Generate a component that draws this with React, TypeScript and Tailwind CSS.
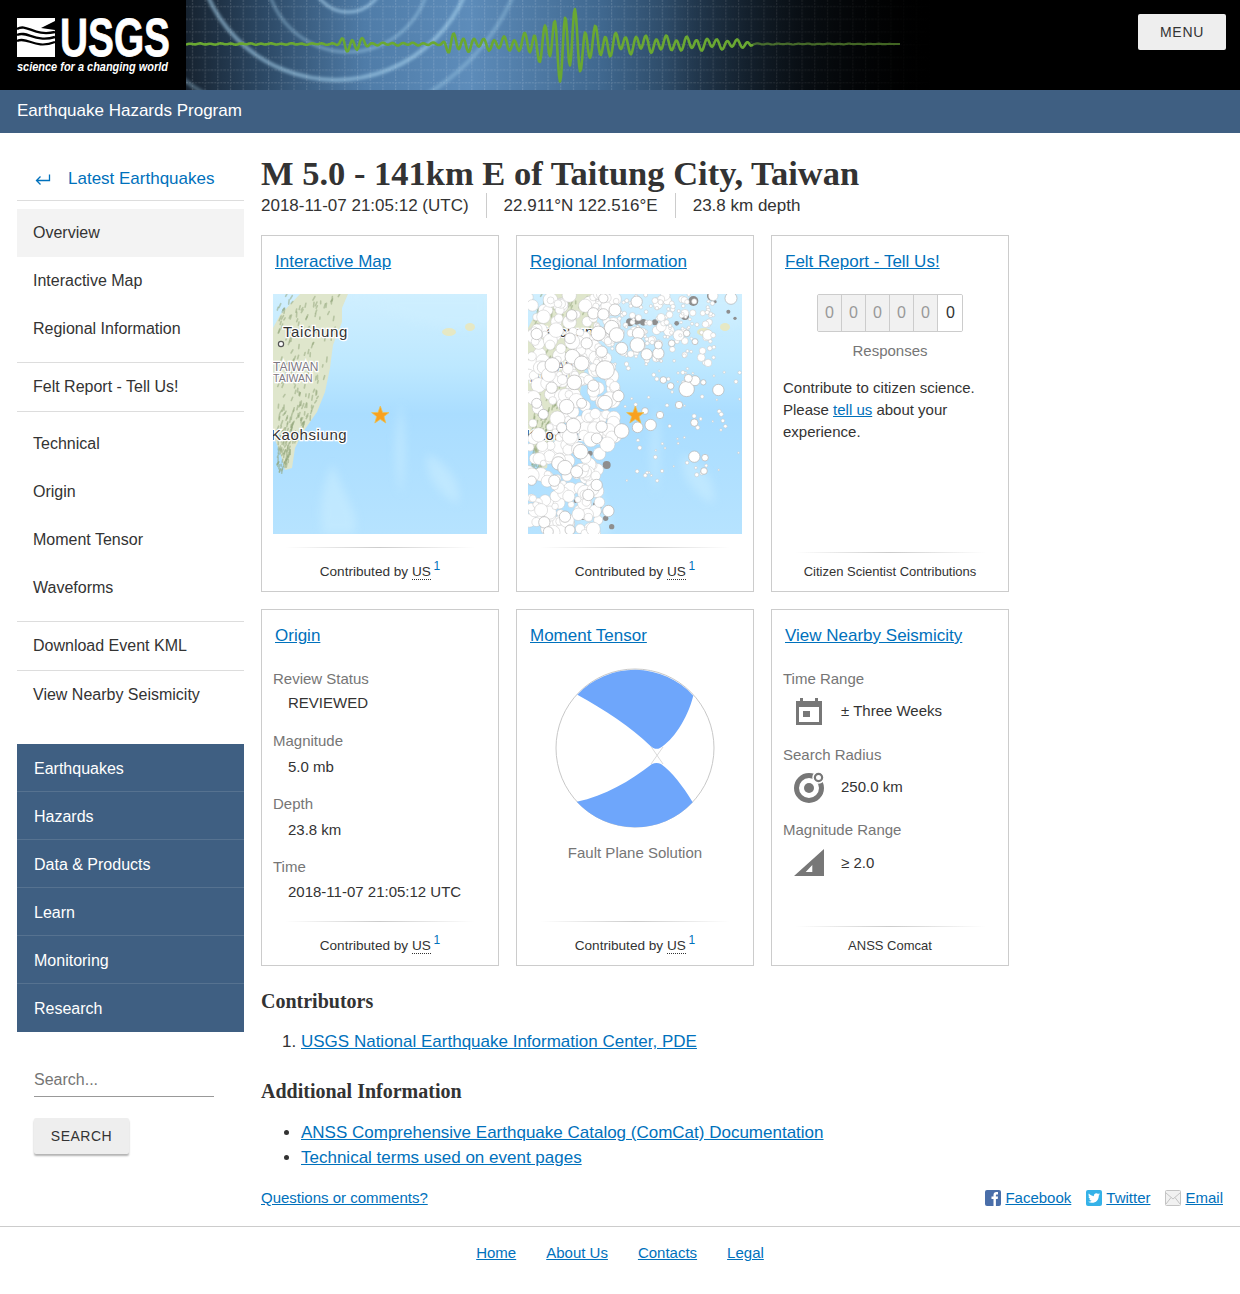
import type { ReactNode } from "react";
import { FaTwitter } from "react-icons/fa";

const sans = "font-['Liberation_Sans',Arial,sans-serif]";
const serif = "font-['Liberation_Serif','Times_New_Roman',serif]";

// small seeded generator so the drawn maps stay the same on every load
function seeded(seed: number) {
  let s = seed;
  return () => {
    s = (s * 16807) % 2147483647;
    return (s - 1) / 2147483646;
  };
}

function interpolate(points: number[][], x: number) {
  for (let i = 1; i < points.length; i++) {
    if (x <= points[i][0]) {
      const [x0, y0] = points[i - 1];
      const [x1, y1] = points[i];
      return y0 + ((y1 - y0) * (x - x0)) / (x1 - x0);
    }
  }
  return points[points.length - 1][1];
}

const ENVELOPE = [
  [186, 0.6], [330, 0.8], [338, 2], [345, 9], [358, 8], [372, 1.5], [440, 1.5], [450, 12], [478, 6], [520, 9],
  [545, 22], [568, 46], [590, 20], [620, 11], [700, 7], [750, 4], [753, 0.6], [880, 0.3], [900, 0],
];

function wavePath(from: number, to: number) {
  let d = "";
  for (let gx = from; gx <= to; gx += 1) {
    const shape = Math.sin(gx * 0.62) * 0.72 + Math.sin(gx * 0.27 + 1) * 0.28;
    const y = 44 + interpolate(ENVELOPE, gx) * shape;
    d += `${d ? "L" : "M"}${gx - 186} ${y.toFixed(1)}`;
  }
  return d;
}

function Banner() {
  return (
    <svg width="745" height="90" viewBox="0 0 745 90" className="block shrink-0">
      <defs>
        <linearGradient id="bannerBg" x1="0" x2="1" y1="0" y2="0">
          <stop offset="0" stopColor="#16222f" />
          <stop offset="0.1" stopColor="#2b4763" />
          <stop offset="0.24" stopColor="#4f7ca8" />
          <stop offset="0.38" stopColor="#5d8cba" />
          <stop offset="0.56" stopColor="#3f678e" />
          <stop offset="0.68" stopColor="#263f58" />
          <stop offset="0.82" stopColor="#111c27" />
          <stop offset="1" stopColor="#000000" />
        </linearGradient>
        <linearGradient id="bannerFade" x1="0" x2="1" y1="0" y2="0">
          <stop offset="0" stopColor="#000" stopOpacity="0" />
          <stop offset="0.8" stopColor="#000" stopOpacity="0.75" />
          <stop offset="1" stopColor="#000" stopOpacity="1" />
        </linearGradient>
        <pattern id="bannerGrid" width="12.7" height="12.7" patternUnits="userSpaceOnUse">
          <path d="M0 6.5H12.7M6.5 0V12.7" stroke="#ffffff" strokeOpacity="0.16" strokeWidth="1" strokeDasharray="2 1" />
        </pattern>
        <filter id="ringBlur">
          <feGaussianBlur stdDeviation="1.6" />
        </filter>
      </defs>
      <rect width="745" height="90" fill="url(#bannerBg)" />
      <g fill="none" stroke="#a9d3ee" filter="url(#ringBlur)">
        <circle cx="162" cy="-24" r="36" strokeWidth="3" strokeOpacity="0.7" />
        <circle cx="162" cy="-30" r="82" strokeWidth="3" strokeOpacity="0.45" />
        <circle cx="150" cy="-60" r="140" strokeWidth="4" strokeOpacity="0.6" />
        <circle cx="130" cy="-90" r="215" strokeWidth="4" strokeOpacity="0.35" />
      </g>
      <rect width="745" height="90" fill="url(#bannerGrid)" />
      <rect x="480" width="265" height="90" fill="url(#bannerFade)" />
      <path d={wavePath(186, 753)} fill="none" stroke="#6aa832" strokeWidth="2.6" strokeLinejoin="round" />
      <path d={wavePath(753, 900)} fill="none" stroke="#5c8f30" strokeWidth="2.2" strokeOpacity="0.7" />
    </svg>
  );
}

function Logo() {
  return (
    <svg width="186" height="90" viewBox="0 0 186 90" className="block shrink-0">
      <rect x="17" y="18" width="38" height="39" fill="#fff" />
      <path d="M55 21L41 28L55 30Z" fill="#000" />
      <g fill="none" stroke="#000">
        <path d="M17 29C27 23 34 37 55 32" strokeWidth="2.4" />
        <path d="M17 35C27 30 35 43 55 37" strokeWidth="2.4" />
        <path d="M17 41C27 36 35 50 55 42" strokeWidth="2.2" />
      </g>
      <text x="60" y="56" textLength="110" lengthAdjust="spacingAndGlyphs" fontFamily="Liberation Sans" fontWeight="700" fontSize="54" fill="#fff" stroke="#fff" strokeWidth="0.8">USGS</text>
      <text x="17" y="71" textLength="151" lengthAdjust="spacingAndGlyphs" fontFamily="Liberation Sans" fontWeight="700" fontStyle="italic" fontSize="12.5" fill="#fff">science for a changing world</text>
    </svg>
  );
}

const MAP_BUBBLES = [
  [265, 190, 14], [365, 200, 17], [300, 225, 18], [235, 235, 17], [265, 238, 17], [170, 240, 16], [648, 190, 18],
  [290, 278, 22], [305, 300, 22], [250, 295, 22], [370, 295, 18], [367, 330, 22], [320, 340, 18], [215, 325, 17],
  [165, 310, 16], [65, 297, 17], [395, 358, 17], [430, 355, 17], [260, 350, 17], [172, 365, 22], [112, 390, 22],
  [200, 385, 22], [270, 405, 28], [178, 442, 22], [235, 452, 17], [110, 458, 17], [155, 515, 22], [65, 505, 15],
  [85, 538, 15], [200, 505, 15], [270, 503, 22], [310, 483, 17], [260, 575, 17], [320, 588, 22], [368, 577, 16],
  [407, 570, 17], [245, 610, 16], [175, 572, 22], [140, 578, 15], [197, 650, 22], [130, 685, 20], [150, 698, 22],
  [185, 710, 18], [118, 737, 17], [50, 737, 14], [245, 750, 17], [220, 780, 17], [280, 828, 17], [150, 845, 17],
  [88, 862, 17], [100, 890, 15], [165, 885, 15], [515, 462, 23], [610, 465, 17], [540, 437, 15], [538, 665, 17],
  [570, 668, 10], [567, 708, 10], [538, 563, 11], [435, 540, 11], [492, 510, 11], [390, 528, 10], [445, 435, 10],
  [467, 453, 10], [520, 430, 12], [565, 442, 8], [430, 330, 12], [470, 325, 10], [515, 295, 10], [540, 320, 9],
];

const MAP_DARK = [
  [590, 183, 14], [535, 198, 15], [510, 243, 12], [345, 262, 12], [365, 255, 14], [385, 262, 10], [420, 262, 9],
  [275, 690, 12], [248, 810, 14], [205, 843, 12], [272, 850, 8], [225, 655, 8], [640, 230, 6], [240, 200, 7],
  [290, 875, 8], [182, 798, 6], [485, 265, 7], [600, 200, 5], [660, 250, 5], [250, 830, 9],
];

const RIGHT_COAST = [[0, 75], [14, 69], [28, 69], [51, 60], [74, 57], [98, 52], [118, 44], [138, 30], [154, 22], [176, 18]];

function smallBubbles() {
  const rnd = seeded(41);
  const out: number[][] = [];
  for (let i = 0; i < 620; i++) {
    const pick = rnd();
    if (pick < 0.5) {
      // the thick band along the island and down to the south
      const y = 178 + rnd() * 720;
      const x = 40 + rnd() * (y > 640 ? 220 : 260);
      out.push([x, y, 9 + rnd() * 14]);
    } else if (pick < 0.8) {
      // the arc running to the north-east
      out.push([240 + rnd() * 360, 178 + rnd() * 210, 4 + rnd() * rnd() * 13]);
    } else {
      const x = 300 + rnd() * 380;
      const y = 400 + rnd() * 340;
      if (rnd() < 0.5) out.push([x, y, 2.5 + rnd() * 4]);
    }
  }
  return out;
}

function landStreaks() {
  const rnd = seeded(7);
  const out: number[][] = [];
  for (let i = 0; i < 230; i++) {
    const y = rnd() * 176;
    const x = 5 + rnd() * (interpolate(RIGHT_COAST, y) - 8);
    out.push([x, y, x - 2 + rnd() * 2, y + 2 + rnd() * 3]);
  }
  return out;
}

const toX = (zoomX: number) => (zoomX - 39) / 3;
const toY = (zoomY: number) => (zoomY - 177) / 3;

function Star() {
  return (
    <polygon
      points="107.3,112 109.6,118.4 116,118.6 111,122.6 112.8,129 107.3,125.3 101.8,129 103.6,122.6 98.6,118.6 105,118.4"
      fill="#f9a11f"
      stroke="#e7c35a"
      strokeWidth="0.8"
    />
  );
}

function MapPicture({ regional = false }: { regional?: boolean }) {
  const id = regional ? "regional" : "interactive";
  const label = { fontFamily: "Liberation Sans", stroke: "#ffffff", strokeWidth: 2.5, paintOrder: "stroke" as const };
  return (
    <svg viewBox="0 0 214 240" width="214" height="240" className="block">
      <defs>
        <linearGradient id={`${id}-sea`} x1="0" x2="0" y1="0" y2="1">
          <stop offset="0" stopColor="#d0efff" />
          <stop offset="0.3" stopColor="#bde8ff" />
          <stop offset="0.5" stopColor="#aaddff" />
          <stop offset="1" stopColor="#b6e3ff" />
        </linearGradient>
        <filter id={`${id}-soft`}>
          <feGaussianBlur stdDeviation="4" />
        </filter>
        <filter id={`${id}-land`}>
          <feGaussianBlur stdDeviation="0.5" />
        </filter>
      </defs>
      <rect width="214" height="240" fill={`url(#${id}-sea)`} />
      <g filter={`url(#${id}-soft)`} fill="#cdefff" opacity="0.5">
        <path d="M60 170C70 200 90 225 80 240H50C45 210 50 190 60 170Z" />
        <path d="M128 110C134 140 132 180 128 200C120 170 122 130 128 110Z" />
        <path d="M85 5C130 25 170 40 214 30V0H85Z" />
        <path d="M155 160C175 170 190 190 185 210C165 200 150 180 155 160Z" />
      </g>
      <path d="M27 0H75L69 14L69 28L60 51L57 74L52 98L44 118L30 138L22 154L19 174L12 176L7 158L0 141V34L7 21Z" fill="#dfe6cc" />
      <g stroke="#8fa378" strokeOpacity="0.5" strokeWidth="1.6" strokeLinecap="round" filter={`url(#${id}-land)`}>
        {landStreaks().map(([x1, y1, x2, y2], i) => (
          <line key={i} x1={x1} y1={y1} x2={x2} y2={y2} />
        ))}
      </g>
      <ellipse cx="176" cy="38" rx="7" ry="4" fill="#e6e8c4" />
      <ellipse cx="197" cy="33" rx="5" ry="4" fill="#e6e8c4" />
      <text x="10" y="43" fontSize="15" fill="#333" letterSpacing="0.6" {...label}>Taichung</text>
      <circle cx="8" cy="50" r="2.6" fill="#fff" stroke="#555" strokeWidth="1.2" />
      <text x="0" y="77" fontSize="12" fill="#7d7882" {...label}>TAIWAN</text>
      <text x="0" y="88" fontSize="10.5" fill="#7d7882" {...label}>TAIWAN</text>
      <text x="-2" y="146" fontSize="15" fill="#333" letterSpacing="0.6" {...label}>Kaohsiung</text>
      {regional && (
        <g>
          {MAP_DARK.map(([x, y, r], i) => (
            <circle key={i} cx={toX(x)} cy={toY(y)} r={r / 3} fill="#8e8e8e" />
          ))}
          {smallBubbles().map(([x, y, r], i) => (
            <circle key={i} cx={toX(x)} cy={toY(y)} r={r / 3} fill="#fff" stroke="#c4c4c4" strokeWidth="0.5" />
          ))}
          {MAP_BUBBLES.map(([x, y, r], i) => (
            <circle key={i} cx={toX(x)} cy={toY(y)} r={r / 3} fill="#fff" stroke="#b5b5b5" strokeWidth="0.7" />
          ))}
        </g>
      )}
      <Star />
    </svg>
  );
}

function BeachBall() {
  return (
    <svg width="160" height="160" viewBox="0 0 160 160" className="block">
      <circle cx="80" cy="80" r="79" fill="#fff" stroke="#c8c8c8" strokeWidth="1" />
      <path d="M22.3 26.7A79 79 0 0 1 138.3 27.7C132 52 118 72 105 80C102 81.5 99 81 96 78.5C75 58 50 42 22.3 26.7Z" fill="#6ea6fb" />
      <path d="M21.7 133.7A79 79 0 0 0 137.7 134.3C128 118 117 104 106 96C103 94.5 100 94.5 97 96C75 113 50 128 21.7 133.7Z" fill="#6ea6fb" />
      <path d="M96 78.5L108 96M108 79L96 96" stroke="#d0d0d0" strokeWidth="0.8" />
    </svg>
  );
}

function Card({ title, children }: { title: string; children: ReactNode }) {
  return (
    <div className="flex h-[357px] flex-col border border-[#ccc] px-[11px] pt-[15px]">
      <a className="h-[22px] pl-[2px] leading-[22px] text-[#0071bc] underline">{title}</a>
      {children}
    </div>
  );
}

function CardFooter({ contributed, text }: { contributed?: boolean; text?: string }) {
  return (
    <div className={contributed ? "mt-auto pb-[8px] text-center" : "mt-auto pb-[11px] text-center"}>
      <div className="mx-auto h-px w-[190px] bg-gradient-to-r from-transparent via-[#ccc] to-transparent" />
      {contributed ? (
        <div className="mt-[9px] h-[26px] text-[13.6px] leading-[30px] text-[#333]">
          Contributed by <abbr className="border-b border-dotted border-[#333] no-underline">US</abbr>{" "}
          <sup className="ml-[-1px] text-[12px] text-[#0071bc]">1</sup>
        </div>
      ) : (
        <div className="mt-[10px] h-[17px] text-[13px] leading-[17px] text-[#333]">{text}</div>
      )}
    </div>
  );
}

function MapCard({ title, regional }: { title: string; regional?: boolean }) {
  return (
    <Card title={title}>
      <div className="mt-[21px]">
        <MapPicture regional={regional} />
      </div>
      <CardFooter contributed />
    </Card>
  );
}

function FeltCard() {
  const digits = ["0", "0", "0", "0", "0", "0"];
  return (
    <Card title="Felt Report - Tell Us!">
      <div className="mt-[21px] flex justify-center">
        <div className="flex h-[38px] overflow-hidden rounded-[2px] border border-[#ccc]">
          {digits.map((d, i) => (
            <span
              key={i}
              className={
                i === 5
                  ? "flex w-[24px] items-center justify-center bg-white pl-[1px] text-[16px] text-[#333]"
                  : "flex w-[24px] items-center justify-center border-r border-[#ccc] bg-[#f1f1f1] text-[16px] text-[#999]"
              }
            >
              {d}
            </span>
          ))}
        </div>
      </div>
      <div className="mt-[8px] text-center text-[15px] leading-[22px] text-[#767676]">Responses</div>
      <p className="mt-[15px] text-[15px] leading-[22px] text-[#333]">
        Contribute to citizen science.
        <br />
        Please <a className="text-[#0071bc] underline">tell us</a> about your experience.
      </p>
      <CardFooter text="Citizen Scientist Contributions" />
    </Card>
  );
}

function OriginCard() {
  const rows = [
    ["Review Status", "REVIEWED", "mb-[2px]", "mb-[16px]"],
    ["Magnitude", "5.0 mb", "mb-[4px]", "mb-[15px]"],
    ["Depth", "23.8 km", "mb-[4px]", "mb-[15px]"],
    ["Time", "2018-11-07 21:05:12 UTC", "mb-[3px]", ""],
  ];
  return (
    <Card title="Origin">
      <dl className="mt-[21px] text-[15px] leading-[22px]">
        {rows.map(([label, value, gap, after]) => (
          <div key={label} className={after}>
            <dt className={`${gap} text-[#767676]`}>{label}</dt>
            <dd className="pl-[15px] text-[#333]">{value}</dd>
          </div>
        ))}
      </dl>
      <CardFooter contributed />
    </Card>
  );
}

function CalendarIcon() {
  return (
    <svg width="28" height="28" viewBox="0 0 28 28" fill="#777">
      <path d="M1 4H5V1H8V4H20V1H23V4H27V28H1ZM4 10V25H24V10Z" />
      <rect x="8" y="14" width="7" height="6" />
    </svg>
  );
}

function RadiusIcon() {
  return (
    <svg width="32" height="32" viewBox="0 0 32 32">
      <circle cx="16" cy="17" r="12.5" fill="none" stroke="#777" strokeWidth="5" />
      <circle cx="16" cy="17" r="5" fill="#777" />
      <circle cx="25.5" cy="6.5" r="5.5" fill="#777" stroke="#fff" strokeWidth="1.5" />
      <circle cx="25.5" cy="6.5" r="2.5" fill="#fff" />
    </svg>
  );
}

function MagnitudeIcon() {
  return (
    <svg width="32" height="30" viewBox="0 0 32 30" fill="#777">
      <path d="M1 28L31 1V28ZM12.7 24H19.3V17Z" fillRule="evenodd" />
    </svg>
  );
}

function NearbyCard() {
  const rows: [string, ReactNode, string, string, string][] = [
    ["Time Range", <CalendarIcon />, "± Three Weeks", "mb-[17px]", "mt-[5px]"],
    ["Search Radius", <RadiusIcon />, "250.0 km", "mb-[16px]", "mt-[5px]"],
    ["Magnitude Range", <MagnitudeIcon />, "≥ 2.0", "", "mt-[6px]"],
  ];
  return (
    <Card title="View Nearby Seismicity">
      <div className="mt-[21px] text-[15px] leading-[22px]">
        {rows.map(([label, icon, value, gap, top]) => (
          <div key={label} className={gap}>
            <div className="text-[#767676]">{label}</div>
            <div className={`${top} flex h-[32px] items-center text-[#333]`}>
              <span className="flex w-[58px] justify-center pr-[7px]">{icon}</span>
              <span>{value}</span>
            </div>
          </div>
        ))}
      </div>
      <CardFooter text="ANSS Comcat" />
    </Card>
  );
}

function TensorCard() {
  return (
    <Card title="Moment Tensor">
      <div className="mt-[21px] flex justify-center">
        <BeachBall />
      </div>
      <div className="mt-[14px] text-center text-[15px] leading-[22px] text-[#767676]">Fault Plane Solution</div>
      <CardFooter contributed />
    </Card>
  );
}

function SideLink({ label, active }: { label: string; active?: boolean }) {
  return (
    <a className={active ? "block h-[48px] bg-[#f3f3f3] px-4 text-[16px] leading-[48px] text-[#333]" : "block h-[48px] px-4 text-[16px] leading-[48px] text-[#333]"}>
      {label}
    </a>
  );
}

function Sidebar() {
  const blue = ["Earthquakes", "Hazards", "Data & Products", "Learn", "Monitoring", "Research"];
  return (
    <aside className="ml-[17px] w-[227px] shrink-0 pt-[23px]">
      <a className="flex h-[45px] items-center border-b border-[#ddd] pt-[2px] pl-[18px] text-[17px] text-[#0071bc]">
        <svg width="16" height="11" viewBox="0 0 16 11" fill="none" stroke="#0071bc" strokeWidth="1.3" className="mr-[17px]">
          <path d="M14.5 0.5V6.5H1.5M5.5 2.5L1.5 6.5L5.5 10.5" />
        </svg>
        Latest Earthquakes
      </a>
      <nav className="mt-[8px]">
        <SideLink label="Overview" active />
        <SideLink label="Interactive Map" />
        <SideLink label="Regional Information" />
        <div className="mt-[9px] border-t border-[#ddd]">
          <SideLink label="Felt Report - Tell Us!" />
        </div>
        <div className="border-t border-[#ddd] pt-[8px]">
          <SideLink label="Technical" />
          <SideLink label="Origin" />
          <SideLink label="Moment Tensor" />
          <SideLink label="Waveforms" />
        </div>
        <div className="mt-[9px] border-t border-[#ddd]">
          <SideLink label="Download Event KML" />
        </div>
        <div className="border-t border-[#ddd]">
          <SideLink label="View Nearby Seismicity" />
        </div>
      </nav>
      <div className="mt-[25px]">
        {blue.map((label, i) => (
          <a
            key={label}
            className={
              i === 5
                ? "block h-[48px] overflow-hidden bg-[#3f5f82] pl-[17px] text-[16px] leading-[50px] text-white"
                : "block h-[48px] overflow-hidden border-b border-[#567290] bg-[#3f5f82] pl-[17px] text-[16px] leading-[50px] text-white"
            }
          >
            {label}
          </a>
        ))}
      </div>
      <div className="mt-[30px] pl-[17px]">
        <input
          placeholder="Search..."
          className="h-[35px] w-[180px] border-b border-[#999] bg-transparent pt-[2px] text-[16px] outline-none placeholder:text-[#757575]"
        />
        <button className="mt-[21px] block h-[36px] w-[95px] rounded-[2px] bg-[#eee] text-[14px] tracking-[0.5px] text-[#333] shadow-[0_2px_2px_rgba(0,0,0,0.3)]">
          SEARCH
        </button>
      </div>
    </aside>
  );
}

function FacebookIcon() {
  return (
    <svg width="16" height="16" viewBox="0 0 16 16">
      <rect width="16" height="16" rx="2" fill="#4a6ea9" />
      <path d="M8.5 16V9H6.5V6.5H8.5V5C8.5 3 9.6 2 11.3 2H13V4.4H11.9C11.1 4.4 10.9 4.8 10.9 5.4V6.5H13L12.7 9H10.9V16Z" fill="#fff" />
    </svg>
  );
}

function TwitterIcon() {
  return (
    <span className="flex h-[16px] w-[16px] items-center justify-center rounded-[2px] bg-[#35b2e8]">
      <FaTwitter className="text-[12px] text-white" />
    </span>
  );
}

function EmailIcon() {
  return (
    <svg width="16" height="16" viewBox="0 0 16 16">
      <rect x="0.5" y="0.5" width="15" height="15" rx="1" fill="#f1f1f1" stroke="#c4c4c4" />
      <path d="M1 3L8 9L15 3M1 14L6 7.5M15 14L10 7.5" fill="none" stroke="#c4c4c4" />
    </svg>
  );
}

export default function App() {
  return (
    <div className={`${sans} min-h-[1294px] bg-white text-[17px] text-[#333]`}>
      <header className="flex h-[90px] bg-black">
        <Logo />
        <Banner />
        <div className="flex flex-1 justify-end pt-[14px] pr-[14px]">
          <button className="h-[36px] w-[88px] rounded-[2px] bg-[#eee] text-[14px] tracking-[0.75px] text-[#333]">MENU</button>
        </div>
      </header>
      <div className="flex h-[43px] items-center bg-[#3f5f82] pb-[2px] pl-[17px] text-[17px] text-white">Earthquake Hazards Program</div>

      <div className="flex h-[1093px]">
        <Sidebar />
        <main className="ml-[17px] w-[962px] pt-[21px]">
          <h1 className={`${serif} h-[39px] text-[34.5px] leading-[39px] font-bold text-[#333]`}>M 5.0 - 141km E of Taitung City, Taiwan</h1>
          <div className="flex h-[24px] items-center pt-[1px]">
            <span className="pr-[17px]">2018-11-07 21:05:12 (UTC)</span>
            <span className="border-l border-[#ccc] px-[17px]">22.911°N 122.516°E</span>
            <span className="border-l border-[#ccc] pl-[17px]">23.8 km depth</span>
          </div>

          <div className="mt-[18px] grid w-[748px] grid-cols-3 gap-[17px]">
            <MapCard title="Interactive Map" />
            <MapCard title="Regional Information" regional />
            <FeltCard />
            <OriginCard />
            <TensorCard />
            <NearbyCard />
          </div>

          <h2 className={`${serif} mt-[23px] h-[24px] text-[20px] leading-[24px] font-bold`}>Contributors</h2>
          <ol className="mt-[16px] list-decimal pl-[40px] leading-[25px]">
            <li>
              <a className="text-[#0071bc] underline">USGS National Earthquake Information Center, PDE</a>
            </li>
          </ol>
          <h2 className={`${serif} mt-[25px] h-[24px] text-[20px] leading-[24px] font-bold`}>Additional Information</h2>
          <ul className="mt-[17px] list-disc pl-[40px] leading-[25px]">
            <li>
              <a className="text-[#0071bc] underline">ANSS Comprehensive Earthquake Catalog (ComCat) Documentation</a>
            </li>
            <li>
              <a className="text-[#0071bc] underline">Technical terms used on event pages</a>
            </li>
          </ul>
          <div className="mt-[17px] flex items-center justify-between text-[15px] leading-[22px]">
            <a className="text-[#0071bc] underline">Questions or comments?</a>
            <div className="flex items-center gap-[15px]">
              <a className="flex items-center gap-[4px]"><FacebookIcon /><span className="text-[#0071bc] underline">Facebook</span></a>
              <a className="flex items-center gap-[4px]"><TwitterIcon /><span className="text-[#0071bc] underline">Twitter</span></a>
              <a className="flex items-center gap-[4px]"><EmailIcon /><span className="text-[#0071bc] underline">Email</span></a>
            </div>
          </div>
        </main>
      </div>

      <footer className="flex justify-center gap-[30px] border-t border-[#ccc] pt-[15px] text-[15px] leading-[22px]">
        <a className="text-[#0071bc] underline">Home</a>
        <a className="text-[#0071bc] underline">About Us</a>
        <a className="text-[#0071bc] underline">Contacts</a>
        <a className="text-[#0071bc] underline">Legal</a>
      </footer>
    </div>
  );
}
